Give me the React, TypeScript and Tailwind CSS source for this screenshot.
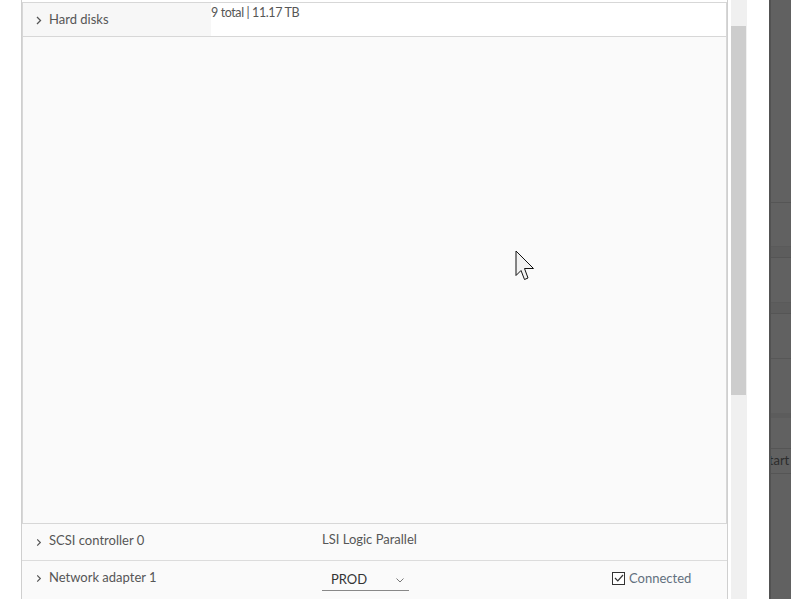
import React from "react";

const Chevron = ({ className = "" }: { className?: string }) => (
  <svg width="6" height="9" viewBox="0 0 6 9" className={className}>
    <path d="M1 1 L4.5 4.5 L1 8" fill="none" stroke="#555" strokeWidth="1.3" />
  </svg>
);

export default function App() {
  const font = { fontFamily: "Lato, 'Noto Sans', 'Liberation Sans', sans-serif" };
  return (
    <div className="relative flex h-[599px] w-[791px] overflow-hidden bg-white text-[13px] text-[#565656]" style={font}>
      <div className="w-[21px] shrink-0" />
      {/* main column */}
      <div className="flex w-[707px] shrink-0 flex-col border-l border-r border-[#cfcfcf] pt-[2px]">
        {/* expanded hard disks box */}
        <div className="flex flex-col border border-[#d7d7d7]">
          <div className="flex h-[34px] border-b border-[#d7d7d7]">
            <div className="flex w-[188px] items-center bg-[#f7f7f7] pl-[13px]">
              <Chevron className="mr-[7px] mt-[1px]" />
              <span>Hard disks</span>
            </div>
            <div className="flex-1 bg-white pt-[2px] text-[12.5px] leading-[16px] tracking-[-0.4px]">9 total | 11.17 TB</div>
          </div>
          <div className="h-[486px] bg-[#fafafa]" />
        </div>
        {/* SCSI */}
        <div className="flex h-[38px] items-center border-b border-[#dcdcdc] bg-[#fafafa]">
          <div className="flex w-[300px] items-center pl-[14px]">
            <Chevron className="mr-[7px] mt-[2px] scale-90" />
            <span className="-mt-[3px]">SCSI controller 0</span>
          </div>
          <div className="-mt-[5px]">LSI Logic Parallel</div>
        </div>
        {/* Network */}
        <div className="flex h-[40px] items-start bg-[#fafafa]">
          <div className="flex w-[300px] items-center pl-[14px] pt-[7px]">
            <Chevron className="mr-[7px] mt-[3px] scale-90" />
            <span>Network adapter 1</span>
          </div>
          <div className="mt-[10px] flex h-[20px] w-[87px] items-center justify-between border-b border-[#888] pl-[9px] pr-[5px] text-[#333]">
            <span>PROD</span>
            <svg width="8" height="5" viewBox="0 0 8 5">
              <path d="M0.5 0.5 L4 4 L7.5 0.5" fill="none" stroke="#777" strokeWidth="1" />
            </svg>
          </div>
          <div className="ml-[203px] mt-[8px] flex items-center">
            <span className="mr-[4px] flex h-[13px] w-[13px] items-center justify-center border border-[#333] bg-white">
              <svg width="10" height="8" viewBox="0 0 10 8">
                <path d="M1 4 L3.8 6.8 L9 1" fill="none" stroke="#333" strokeWidth="1.2" />
              </svg>
            </span>
            <span className="text-[#62707e]">Connected</span>
          </div>
        </div>
      </div>
      <div className="w-[3px] shrink-0" />
      {/* scrollbar */}
      <div className="flex w-[16px] shrink-0 flex-col bg-[#f0f0f0]">
        <div className="h-[26px]" />
        <div className="mr-[1px] h-[369px] bg-[#cdcdcd]" />
      </div>
      <div className="w-[22px] shrink-0" />
      {/* dark side panel */}
      <div className="flex w-[22px] shrink-0 flex-col overflow-hidden border-l-2 border-[#525252] bg-[#616161]">
        <div className="h-[203px] shrink-0 border-b border-[#555]" />
        <div className="h-[44px] shrink-0 border-b border-[#5a5a5a]" />
        <div className="h-[11px] shrink-0 border-b border-[#555] bg-[#5d5d5d]" />
        <div className="h-[45px] shrink-0 border-b border-[#5a5a5a]" />
        <div className="h-[11px] shrink-0 border-b border-[#555] bg-[#5d5d5d]" />
        <div className="h-[45px] shrink-0 border-b border-[#575757]" />
        <div className="h-[54px] shrink-0" />
        <div className="h-[5px] shrink-0 bg-[#5c5c5c]" />
        <div className="h-[31px] shrink-0 border-b border-[#555]" />
        <div className="flex h-[25px] shrink-0 items-center overflow-hidden border-b border-[#555] whitespace-nowrap text-[13px] text-[#2c2c2c]">
          <span className="-ml-[9px]">Start T</span>
        </div>
        <div className="flex-1" />
      </div>
      {/* mouse cursor overlay */}
      <svg className="absolute left-[515px] top-[250px]" width="20" height="32" viewBox="0 0 20 32">
        <path
          d="M1 1 L1 25.5 L6 20.5 L9.5 29.5 L13 28 L9.5 18.5 L18.5 18.5 Z"
          fill="#f2f2f2"
          stroke="#111"
          strokeWidth="1"
          strokeLinejoin="miter"
        />
      </svg>
    </div>
  );
}
